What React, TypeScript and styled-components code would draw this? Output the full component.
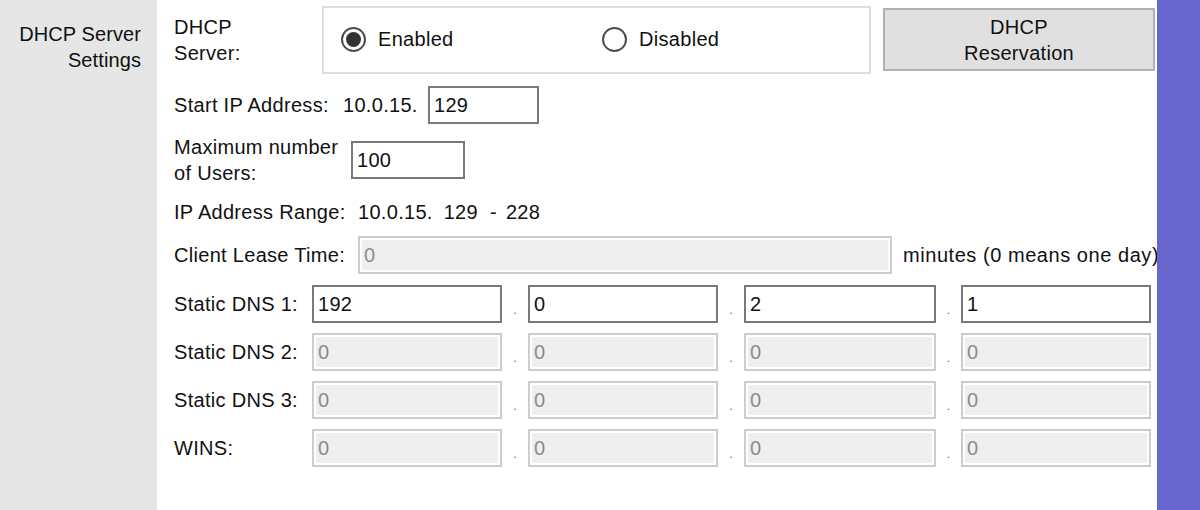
import { Fragment } from 'react';
import styled, { createGlobalStyle } from 'styled-components';

const GlobalStyle = createGlobalStyle`
  body {
    margin: 0;
    font-family: "Liberation Sans", Arial, sans-serif;
    font-size: 20px;
    letter-spacing: 0.3px;
    color: #111;
    background: #fff;
  }
`;

const dnsRows = [
  { label: 'Static DNS 1:', values: ['192', '0', '2', '1'], disabled: false },
  { label: 'Static DNS 2:', values: ['0', '0', '0', '0'], disabled: true },
  { label: 'Static DNS 3:', values: ['0', '0', '0', '0'], disabled: true },
  { label: 'WINS:', values: ['0', '0', '0', '0'], disabled: true },
];

export default function App() {
  return (
    <>
      <GlobalStyle />
      <Page>
        <Sidebar>
          DHCP Server
          <br />
          Settings
        </Sidebar>

        <Main>
          <TopRow>
            <FieldLabel $width={148}>
              DHCP
              <br />
              Server:
            </FieldLabel>
            <RadioBox>
              <RadioOption>
                <RadioCircle $checked />
                Enabled
              </RadioOption>
              <RadioOption>
                <RadioCircle />
                Disabled
              </RadioOption>
            </RadioBox>
            <ReservationButton>
              DHCP
              <br />
              Reservation
            </ReservationButton>
          </TopRow>

          <Row $mt={7}>
            <FieldLabel $width={169}>Start IP Address:</FieldLabel>
            <FieldLabel $width={85}>10.0.15.</FieldLabel>
            <TextBox $width={111} defaultValue="129" />
          </Row>

          <Row $mt={17}>
            <FieldLabel $width={177}>
              Maximum number
              <br />
              of Users:
            </FieldLabel>
            <TextBox $width={114} defaultValue="100" />
          </Row>

          <Row $mt={14}>
            <FieldLabel $width={184}>IP Address Range:</FieldLabel>
            <span>10.0.15.</span>
            <RangePart $ml={11}>129</RangePart>
            <RangePart $ml={12}>-</RangePart>
            <RangePart $ml={9}>228</RangePart>
          </Row>

          <Row $mt={5}>
            <FieldLabel $width={184}>Client Lease Time:</FieldLabel>
            <TextBox $width={534} defaultValue="0" disabled />
            <Note>minutes (0 means one day)</Note>
          </Row>

          <DnsGrid>
            {dnsRows.map(row => (
              <DnsRow key={row.label}>
                <span>{row.label}</span>
                {row.values.map((v, i) => (
                  <Fragment key={i}>
                    {i > 0 && <Dot>.</Dot>}
                    <TextBox defaultValue={v} disabled={row.disabled} />
                  </Fragment>
                ))}
              </DnsRow>
            ))}
          </DnsGrid>
        </Main>

        <Accent />
      </Page>
    </>
  );
}

const Page = styled.div`
  display: flex;
  width: 1200px;
  height: 510px;
  overflow: hidden;
`;

const Sidebar = styled.div`
  width: 157px;
  flex-shrink: 0;
  box-sizing: border-box;
  background: #e6e6e6;
  padding: 21px 16px 0 0;
  text-align: right;
  line-height: 26px;
  letter-spacing: 0.1px;
`;

const Main = styled.div`
  flex: 1;
  min-width: 0;
  overflow: hidden;
  padding-left: 17px;
  display: flex;
  flex-direction: column;
`;

const Accent = styled.div`
  width: 43px;
  flex-shrink: 0;
  background: #6666cc;
`;

const TopRow = styled.div`
  display: flex;
  align-items: center;
  height: 79px;
`;

const FieldLabel = styled.div<{ $width: number }>`
  width: ${p => p.$width}px;
  flex-shrink: 0;
  line-height: 26px;
  white-space: nowrap;
`;

const RadioBox = styled.div`
  width: 549px;
  height: 68px;
  flex-shrink: 0;
  box-sizing: border-box;
  border: 2px solid #dedede;
  display: flex;
  align-items: center;
  padding-left: 17px;
`;

const RadioOption = styled.label`
  display: flex;
  align-items: center;
  gap: 12px;
  width: 261px;
`;

const RadioCircle = styled.span<{ $checked?: boolean }>`
  width: 25px;
  height: 25px;
  box-sizing: border-box;
  border-radius: 50%;
  border: 2px solid #4d4d4d;
  background: #fff;
  display: flex;
  align-items: center;
  justify-content: center;

  &::after {
    content: '';
    width: 15px;
    height: 15px;
    border-radius: 50%;
    background: ${p => (p.$checked ? '#333' : 'transparent')};
  }
`;

const ReservationButton = styled.button`
  margin-left: 12px;
  width: 272px;
  height: 63px;
  flex-shrink: 0;
  box-sizing: border-box;
  background: #e0e0e0;
  border: 2px solid #b0b0b0;
  font: inherit;
  letter-spacing: inherit;
  line-height: 26px;
  color: #111;
  padding: 0;
`;

const Row = styled.div<{ $mt: number }>`
  display: flex;
  align-items: center;
  height: 38px;
  margin-top: ${p => p.$mt}px;
  white-space: nowrap;
`;

const RangePart = styled.span<{ $ml: number }>`
  margin-left: ${p => p.$ml}px;
`;

const Note = styled.span`
  margin-left: 11px;
  letter-spacing: 0.55px;
  flex-shrink: 0;
`;

const TextBox = styled.input<{ $width?: number }>`
  width: ${p => (p.$width ? `${p.$width}px` : '100%')};
  height: 38px;
  flex-shrink: 0;
  box-sizing: border-box;
  border: 2px solid #7a7a7a;
  background: #fff;
  padding: 0 4px;
  font: inherit;
  letter-spacing: inherit;
  color: #111;
  outline: none;

  &:disabled {
    border-color: #cccccc;
    background: #efefef;
    box-shadow: inset 0 0 0 2px #fff;
    color: #8c8c8c;
  }
`;

const DnsGrid = styled.div`
  display: flex;
  flex-direction: column;
  gap: 10px;
  margin-top: 11px;
`;

const DnsRow = styled.div`
  display: grid;
  grid-template-columns: 138px 190px 26px 190px 26px 192px 25px 190px;
  align-items: center;
  height: 38px;
  white-space: nowrap;
`;

const Dot = styled.span`
  font-size: 12px;
  color: #3a6ea5;
  text-align: center;
  padding-top: 12px;
`;
